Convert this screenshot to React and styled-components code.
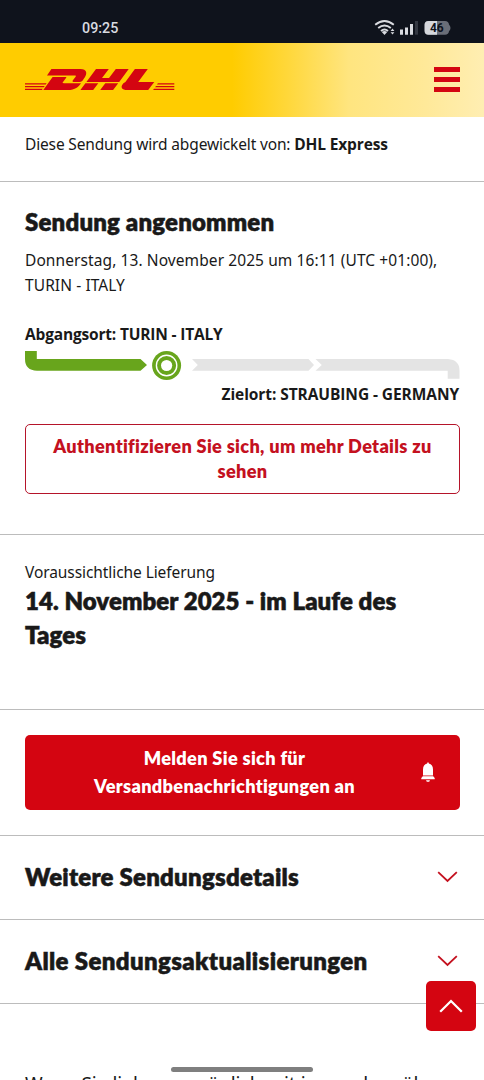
import React from "react";
import styled, { createGlobalStyle } from "styled-components";

const GlobalStyle = createGlobalStyle`
  * { box-sizing: border-box; }
  html, body { margin: 0; padding: 0; background: #fff; overflow: hidden; }
`;

const Screen = styled.div`
  position: relative;
  display: flex;
  flex-direction: column;
  width: 484px;
  height: 1080px;
  overflow: hidden;
  background: #fff;
  color: #191919;
  font-family: "Noto Sans", "Open Sans", sans-serif;
  font-size: 16px;
`;

const StatusBar = styled.div`
  flex: none;
  display: flex;
  align-items: center;
  justify-content: space-between;
  height: 43px;
  padding: 12px 33px 0 82px;
  background: #0f131c;
`;

const Clock = styled.span`
  font: 500 14.3px/20px Roboto, sans-serif;
  color: #d9dbe0;
`;

const Header = styled.header`
  flex: none;
  display: flex;
  align-items: center;
  justify-content: space-between;
  height: 74px;
  padding: 0 24px 0 25px;
  background: linear-gradient(90deg, #ffcc00 0%, #ffcc00 48%, #ffd83d 60%, #ffe57f 72%, #ffe999 88%, #ffeeb2 100%);
`;

const MenuButton = styled.button`
  display: flex;
  flex-direction: column;
  gap: 5px;
  width: 26px;
  padding: 0 0 1px;
  border: 0;
  background: none;
`;

const MenuBar = styled.span`
  height: 5px;
  background: #d40511;
`;

const Section = styled.section`
  flex: none;
  height: ${(p) => p.$h}px;
  padding: ${(p) => p.$top}px 24px 0 25px;
  border-bottom: 1px solid #bcbcbc;
`;

const Line = styled.div`
  font-size: ${(p) => p.$size || 15.5}px;
  line-height: ${(p) => p.$lh || 24}px;
  letter-spacing: ${(p) => p.$ls || 0}px;
  white-space: nowrap;
`;

const Strong = styled.strong`
  font-weight: 700;
  font-family: "Open Sans", "Noto Sans", sans-serif;
`;

const PlaceLabel = styled(Line)`
  padding-right: 1px;
  font-family: "Open Sans", "Noto Sans", sans-serif;
  font-weight: 700;
  text-align: ${(p) => p.$align || "left"};
`;

const ButtonText = styled(Line)`
  flex: 1;
  font-family: Lato, "Noto Sans", sans-serif;
  font-size: 18.2px;
  font-weight: 800;
  letter-spacing: 0.3px;
  text-align: center;
`;

const Heading = styled.h2`
  margin: 0;
  font-family: Lato, "Open Sans", sans-serif;
  font-size: 24px;
  line-height: 34px;
  font-weight: 800;
  -webkit-text-stroke: 0.5px #191919;
  letter-spacing: ${(p) => p.$ls || 0}px;
  white-space: nowrap;
`;

const Timestamp = styled(Line)`
  margin: 9px 0 25px;
`;

const Track = styled.svg`
  display: block;
  width: 435px;
  height: 32px;
  margin: 2px 0;
`;

const OutlineButton = styled.button`
  display: block;
  width: 435px;
  height: 70px;
  margin-top: 18px;
  padding: 0 0 1px;
  border: 1px solid #b5142a;
  border-radius: 5px;
  background: #fff;
  color: #c4111f;
  font-family: inherit;
`;

const SolidButton = styled.button`
  display: flex;
  align-items: center;
  width: 435px;
  height: 75px;
  padding: 0 23px 1px 5px;
  border: 0;
  border-radius: 5px;
  background: #d40511;
  color: #fff;
  font-family: inherit;
`;

const AccordionRow = styled(Section)`
  display: flex;
  align-items: center;
  justify-content: space-between;
  padding: 0 26px 2px 25px;
`;

const FooterNote = styled.p`
  flex: none;
  margin: 65px 25px 0;
  font-size: 19px;
  line-height: 30px;
  white-space: nowrap;
`;

const TopButton = styled.button`
  position: absolute;
  right: 8px;
  bottom: 49px;
  display: flex;
  align-items: center;
  justify-content: center;
  width: 50px;
  height: 50px;
  padding: 0;
  border: 0;
  border-radius: 5px;
  background: #d40511;
`;

const HomeIndicator = styled.div`
  position: absolute;
  left: 171px;
  bottom: 8px;
  width: 142px;
  height: 5px;
  border-radius: 3px;
  background: #7f7f7f;
`;

const StatusIcons = () => (
  <svg width="77" height="18" viewBox="374 19 77 18" fill="none">
    <g stroke="#d9dbe0" strokeWidth="1.9">
      <path d="M375.2 24.8Q384.5 17.2 393.8 24.8" />
      <path d="M378.2 28Q384.5 22.8 390.8 28" />
      <path d="M381 31Q384.5 28 388 31" />
    </g>
    <path d="M381.8 32Q384.5 29.8 387.2 32L384.5 35Z" fill="#d9dbe0" />
    <path d="M390.6 31L392.5 28.6L394.4 31ZM390.6 32.2H394.4L392.5 34.6Z" fill="#d9dbe0" />
    <path d="M400 29.5h3v5.2h-3zM405 27.5h3v7.2h-3zM410 24h3v10.7h-3z" fill="#d9dbe0" />
    <path d="M415 21h3v13.7h-3z" fill="#343842" />
    <path d="M428.5 21H445Q448.6 21 449 24.5Q450.5 26 450.5 28Q450.5 30 449 31.3Q448.6 34.7 445 34.7H428.5Q424.6 34.7 424.6 31V24.8Q424.6 21 428.5 21Z" fill="#6a6e78" />
    <path d="M437 21H428.5Q424.6 21 424.6 24.8V31Q424.6 34.7 428.5 34.7H437Z" fill="#d5d7dc" />
    <text x="436.8" y="32.2" fontFamily="Roboto, sans-serif" fontSize="12" fontWeight="700" textAnchor="middle" fill="#0f131c">46</text>
  </svg>
);

const Logo = () => (
  <svg width="150" height="22" viewBox="0 0 150 22" fill="#d40511">
    <path d="M0 14.2H21.6L20.7 15.5H0ZM0 17H19.7L18.8 18.3H0ZM0 19.8H17.8L16.9 21.1H0Z" />
    <path d="M132.9 14.2H149.3V15.5H132ZM131 17H149.3V18.3H130.1ZM129 19.8H149.3V21.1H128.1Z" />
    <path d="M26.4 0H55.5C62 0 62.4 4.6 59.7 8.4C59 9.4 58 11 57.2 12.1C56.8 12.6 56.2 12.9 54.8 12.9H48.6C47.2 12.9 47.3 12.1 47.9 11.3L50.6 7.7C51.1 7 50.8 6.5 49.9 6.5H22Z" />
    <path d="M27.6 8H40.6C41.5 8 41.5 8.5 41 9.1L38 13C37.4 13.8 37.4 14.2 38.8 14.2H56C53.8 17.6 50 21.1 43 21.1H18.3Z" />
    <path d="M71 0H83.8L77 9.1H84L90.8 0H103.7L94.2 12.9H61.4ZM60.4 14.2H73.3L68.2 21.1H55.4ZM80.3 14.2H93.2L88.1 21.1H75.2Z" />
    <path d="M109.9 0H122.8L113.2 12.9H129.3L128.3 14.2L123.2 21.1H102.5C96.5 21.1 95.6 18 97.5 15.5L98.4 14.2L100.4 12.9Z" />
  </svg>
);

const BellIcon = () => (
  <svg width="18" height="22" viewBox="0 0 18 22" fill="#fff">
    <path d="M8.2 1.9Q9 .4 9.8 1.9V2.6Q14 3.8 14 8.5V14.5H4V8.5Q4 3.8 8.2 2.6Z" />
    <path d="M3.8 15.2H14.2L15.7 17V18.2H2.3V17ZM7 19.2H11L10.2 20.8H7.8Z" />
  </svg>
);

const ChevronDown = () => (
  <svg width="21" height="12" viewBox="0 0 21 12" fill="none" stroke="#c4111f" strokeWidth="1.8">
    <path d="M1.2 1.2L10.5 10L19.8 1.2" />
  </svg>
);

const ProgressTrack = () => (
  <Track viewBox="0 0 435 32">
    <path d="M0 3H11.8V11H115.5L122 17L115.5 22.8H12Q0 22.3 0 11Z" fill="#68a51c" />
    <circle cx="141.6" cy="17.5" r="14.5" fill="#68a51c" />
    <circle cx="141.6" cy="17.5" r="10.2" fill="none" stroke="#fff" strokeWidth="1.4" />
    <circle cx="141.6" cy="17.5" r="5.6" fill="#fff" />
    <path d="M167 11H283.5L289 17L283.5 22.8H167L172.8 17Z" fill="#e4e4e4" />
    <path d="M290.5 11H423Q434.5 12 434.5 22.5V30.8H422.7V22.8H290.5L296.8 17Z" fill="#e4e4e4" />
  </Track>
);

const details = [
  { title: "Weitere Sendungsdetails", ls: 0.22 },
  { title: "Alle Sendungsaktualisierungen", ls: 0.36 },
];

export default function App() {
  return (
    <Screen>
      <GlobalStyle />
      <StatusBar>
        <Clock>09:25</Clock>
        <StatusIcons />
      </StatusBar>
      <Header>
        <Logo />
        <MenuButton aria-label="Menü">
          <MenuBar />
          <MenuBar />
          <MenuBar />
        </MenuButton>
      </Header>
      <Section $h={65} $top={15}>
        <Line $ls={-0.15}>
          Diese Sendung wird abgewickelt von: <Strong>DHL Express</Strong>
        </Line>
      </Section>
      <Section $h={353} $top={23}>
        <Heading $ls={0.17}>Sendung angenommen</Heading>
        <Timestamp $lh={24.5} $ls={0.09}>
          Donnerstag, 13. November 2025 um 16:11 (UTC +01:00),
          <br />
          TURIN - ITALY
        </Timestamp>
        <PlaceLabel $ls={-0.18}>Abgangsort: TURIN - ITALY</PlaceLabel>
        <ProgressTrack />
        <PlaceLabel $align="right" $ls={-0.08}>Zielort: STRAUBING - GERMANY</PlaceLabel>
        <OutlineButton>
          <ButtonText as="div" $lh={24.5}>
            Authentifizieren Sie sich, um mehr Details zu
            <br />
            sehen
          </ButtonText>
        </OutlineButton>
      </Section>
      <Section $h={175} $top={25}>
        <Line $ls={-0.08}>Voraussichtliche Lieferung</Line>
        <Heading $ls={0.07}>
          14. November 2025 - im Laufe des
          <br />
          Tages
        </Heading>
      </Section>
      <Section $h={126} $top={25}>
        <SolidButton>
          <ButtonText as="span" $lh={28}>
            Melden Sie sich für
            <br />
            Versandbenachrichtigungen an
          </ButtonText>
          <BellIcon />
        </SolidButton>
      </Section>
      {details.map(({ title, ls }) => (
        <AccordionRow key={title} $h={84}>
          <Heading $ls={ls}>{title}</Heading>
          <ChevronDown />
        </AccordionRow>
      ))}
      <FooterNote>Wenn Sie lieber persönlich mit jemandem über</FooterNote>
      <TopButton aria-label="Nach oben">
        <svg width="24" height="14" viewBox="0 0 24 14" fill="none" stroke="#fff" strokeWidth="2.3">
          <path d="M1.2 12.7L12 2L22.8 12.7" />
        </svg>
      </TopButton>
      <HomeIndicator />
    </Screen>
  );
}
